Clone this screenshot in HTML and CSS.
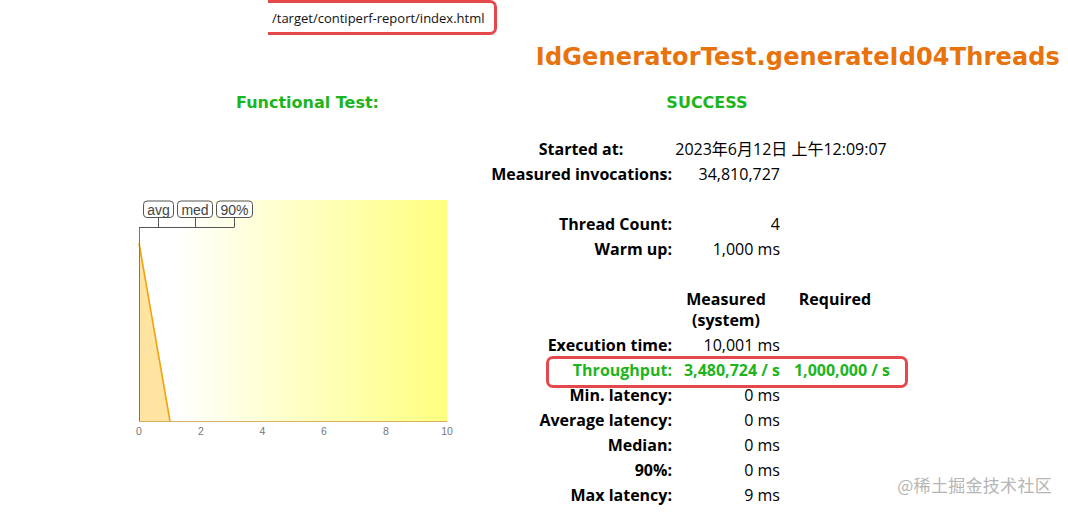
FILE: index.html
```html
<!DOCTYPE html>
<html>
<head>
<meta charset="utf-8">
<link rel="stylesheet" href="styles.css">
</head>
<body>
<div class="topbar"><span class="url-box">/target/contiperf-report/index.html</span></div>
<h1 class="title">IdGeneratorTest.generateId04Threads</h1>
<div class="status">
  <div class="status-label">Functional Test:</div>
  <div class="status-value">SUCCESS</div>
</div>
<div class="main">
  <div class="chart">
    <svg width="330" height="245" viewBox="130 195 330 245" xmlns="http://www.w3.org/2000/svg">
      <defs>
        <linearGradient id="bg" x1="0" y1="0" x2="1" y2="0">
          <stop offset="0" stop-color="#ffffff"/>
          <stop offset="0.12" stop-color="#ffffff"/>
          <stop offset="1" stop-color="#ffff80"/>
        </linearGradient>
      </defs>
      <rect x="139" y="200" width="308" height="221" fill="url(#bg)"/>
      <polygon points="139,243 170,421 139,421" fill="#ffe3a0"/>
      <line x1="139" y1="243" x2="170" y2="421" stroke="#f2a20c" stroke-width="1.6"/>
      <line x1="139.5" y1="227" x2="139.5" y2="421" stroke="#777" stroke-width="1"/>
      <line x1="139" y1="421.5" x2="447" y2="421.5" stroke="#d8b060" stroke-width="1"/>
      <polyline points="139,227.5 234.5,227.5" fill="none" stroke="#555" stroke-width="1"/>
      <line x1="158.5" y1="217" x2="158.5" y2="227" stroke="#555" stroke-width="1"/>
      <line x1="195.5" y1="217" x2="195.5" y2="227" stroke="#555" stroke-width="1"/>
      <line x1="234.5" y1="217" x2="234.5" y2="227" stroke="#555" stroke-width="1"/>
      <rect x="143.5" y="201" width="30" height="16.5" rx="3.5" fill="#fff" stroke="#555" stroke-width="1"/>
      <rect x="177.5" y="201" width="35" height="16.5" rx="3.5" fill="#fff" stroke="#555" stroke-width="1"/>
      <rect x="216.5" y="201" width="36" height="16.5" rx="3.5" fill="#fff" stroke="#555" stroke-width="1"/>
      <text class="lbl" x="158.5" y="214.5" text-anchor="middle">avg</text>
      <text class="lbl" x="195" y="214.5" text-anchor="middle">med</text>
      <text class="lbl" x="234.5" y="214.5" text-anchor="middle">90%</text>
      <text class="tick" x="139" y="435" text-anchor="middle">0</text>
      <text class="tick" x="201" y="435" text-anchor="middle">2</text>
      <text class="tick" x="262.5" y="435" text-anchor="middle">4</text>
      <text class="tick" x="324" y="435" text-anchor="middle">6</text>
      <text class="tick" x="386" y="435" text-anchor="middle">8</text>
      <text class="tick" x="447" y="435" text-anchor="middle">10</text>
    </svg>
  </div>
  <div class="stats">
    <div class="row"><div class="th center">Started at:</div><div class="td span2 center">2023年6月12日 上午12:09:07</div></div>
    <div class="row"><div class="th">Measured invocations:</div><div class="td">34,810,727</div><div class="td"></div></div>
    <div class="row blank"></div>
    <div class="row"><div class="th">Thread Count:</div><div class="td">4</div><div class="td"></div></div>
    <div class="row"><div class="th">Warm up:</div><div class="td">1,000 ms</div><div class="td"></div></div>
    <div class="row blank"></div>
    <div class="row head-row"><div class="th"></div><div class="th center">Measured<br>(system)</div><div class="th center">Required</div></div>
    <div class="row"><div class="th">Execution time:</div><div class="td">10,001 ms</div><div class="td"></div></div>
    <div class="row hl green"><div class="th">Throughput:</div><div class="td bold">3,480,724 / s</div><div class="td bold">1,000,000 / s</div></div>
    <div class="row"><div class="th">Min. latency:</div><div class="td">0 ms</div><div class="td"></div></div>
    <div class="row"><div class="th">Average latency:</div><div class="td">0 ms</div><div class="td"></div></div>
    <div class="row"><div class="th">Median:</div><div class="td">0 ms</div><div class="td"></div></div>
    <div class="row"><div class="th">90%:</div><div class="td">0 ms</div><div class="td"></div></div>
    <div class="row"><div class="th">Max latency:</div><div class="td">9 ms</div><div class="td"></div></div>
  </div>
</div>
<div class="watermark">@稀土掘金技术社区</div>
</body>
</html>
```
FILE: styles.css
```css
html, body {
  margin: 0;
  padding: 0;
  background: #fff;
}
body {
  width: 1068px;
  height: 512px;
  overflow: hidden;
  position: relative;
  font-family: "Open Sans", "Noto Sans CJK SC", sans-serif;
  color: #000;
}
.topbar {
  height: 40px;
}
.url-box {
  display: inline-block;
  box-sizing: border-box;
  margin-left: 268px;
  height: 35px;
  padding: 3px 0 0 4px;
  width: 229px;
  border: 3px solid #e5484b;
  border-left: none;
  border-radius: 0 7px 7px 0;
  font-size: 13px;
  line-height: 24px;
  white-space: nowrap;
  color: #111;
}
.title {
  margin: 0;
  height: 35px;
  line-height: 34px;
  text-align: right;
  padding-right: 8px;
  font-family: "DejaVu Sans", Verdana, sans-serif;
  font-weight: bold;
  font-size: 24px;
  letter-spacing: 0.15px;
  color: #e8730c;
}
.status {
  display: flex;
  height: 61px;
  font-family: "DejaVu Sans", Verdana, sans-serif;
  font-weight: bold;
  font-size: 16px;
  color: #1db51d;
  line-height: 56px;
}
.status-label {
  width: 476px;
  padding-left: 139px;
  box-sizing: border-box;
  text-align: center;
}
.status-value {
  width: 460px;
  padding-left: 2px;
  box-sizing: border-box;
  text-align: center;
}
.main {
  display: flex;
  align-items: flex-start;
}
.chart {
  margin-left: 130px;
  margin-top: 59px;
  width: 330px;
  height: 245px;
}
.chart svg {
  display: block;
}
.lbl {
  font-family: "Liberation Sans", Arial, sans-serif;
  font-size: 14px;
  fill: #444;
}
.tick {
  font-family: "Liberation Sans", Arial, sans-serif;
  font-size: 10.5px;
  fill: #777;
}
.stats {
  margin-left: 30px;
  margin-top: 1px;
  display: flex;
  flex-direction: column;
  font-size: 16px;
  line-height: 25px;
}
.row {
  display: grid;
  grid-template-columns: 182px 108px 110px;
  height: 25px;
  position: relative;
}
.head-row {
  height: 46px;
  line-height: 21px;
  padding-top: 2px;
  box-sizing: border-box;
}
.th {
  font-weight: bold;
  text-align: right;
  white-space: nowrap;
}
.td {
  text-align: right;
  white-space: nowrap;
}
.center {
  text-align: center;
}
.span2 {
  grid-column: span 2;
}
.green {
  color: #1db51d;
}
.bold {
  font-weight: bold;
}
.hl::before {
  content: "";
  position: absolute;
  left: 56px;
  top: -2px;
  width: 362px;
  height: 32px;
  box-sizing: border-box;
  border: 3px solid #e5484b;
  border-radius: 7px;
}
.watermark {
  position: absolute;
  right: 16px;
  top: 472px;
  font-family: "Noto Sans CJK SC", sans-serif;
  font-size: 17px;
  line-height: 26px;
  color: #b5b5b5;
  letter-spacing: 0.3px;
}
```
